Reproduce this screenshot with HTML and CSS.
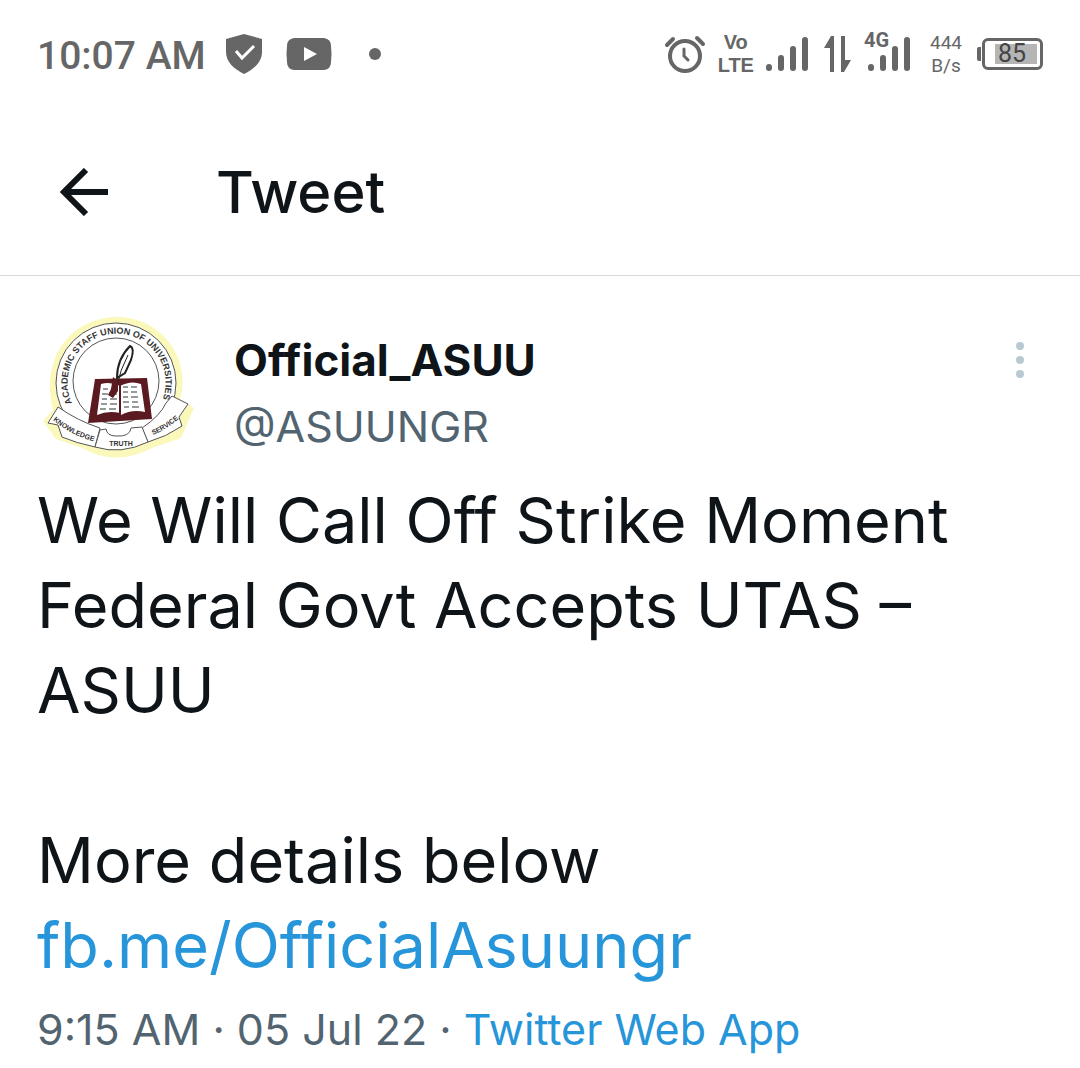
FILE: index.html
```html
<!DOCTYPE html>
<html lang="en">
<head>
  <meta charset="UTF-8">
  <meta name="viewport" content="width=device-width, initial-scale=1.0">
  <title>Tweet</title>
  <link rel="stylesheet" href="styles.css">
</head>
<body>
  <!-- Phone status bar -->
  <div class="status-bar">
    <div class="status-left">
      <span class="clock">10:07 AM</span>
      <svg class="shield" width="36" height="40" viewBox="0 0 36 40">
        <path d="M18 0 L36 5 V18 C36 28 28 35 18 40 C8 35 0 28 0 18 V5 Z" fill="#666"/>
        <path d="M10 17 L16 24 L28 12" fill="none" stroke="#fff" stroke-width="3"/>
      </svg>
      <svg class="video" width="46" height="32" viewBox="0 0 46 32">
        <path d="M8 0 H38 Q45 1 45 8 Q46 16 45 24 Q45 31 38 32 H8 Q1 31 1 24 Q0 16 1 8 Q1 1 8 0 Z" fill="#666"/>
        <path d="M18 9 L31 16 L18 23 Z" fill="#fff"/>
      </svg>
      <span class="dot"></span>
    </div>
    <div class="status-right">
      <svg class="alarm" width="42" height="40" viewBox="0 0 42 40" fill="none" stroke="#666" stroke-width="4" stroke-linecap="round">
        <circle cx="21" cy="22" r="15"/>
        <path d="M20 15 V22 L24 26" stroke-width="3"/>
        <path d="M3 11 L9 5 M33 4 L39 10"/>
      </svg>
      <span class="volte"><span>Vo</span><span>LTE</span></span>
      <svg class="signal" width="42" height="34" viewBox="0 0 42 34" stroke="#666" stroke-width="6" stroke-linecap="round">
        <path d="M3 30 V31 M15 21 V31 M27 12 V31 M39 3 V31"/>
      </svg>
      <svg class="arrows" width="28" height="36" viewBox="0 0 28 36">
        <path d="M7 0 H10 V36 H6 V12 H0 Z M17 0 H21 V24 H27 L20 36 H17 Z" fill="#666"/>
      </svg>
      <span class="network">
        <span class="network-type">4G</span>
        <svg class="signal" width="42" height="34" viewBox="0 0 42 34" stroke="#666" stroke-width="6" stroke-linecap="round">
          <path d="M3 30 V31 M15 21 V31 M27 12 V31 M39 3 V31"/>
        </svg>
      </span>
      <span class="speed"><span>444</span><span>B/s</span></span>
      <span class="battery"><span class="battery-level">85</span></span>
    </div>
  </div>

  <header class="header">
    <button class="back" aria-label="Back">
      <svg width="48" height="48" viewBox="0 0 48 48" fill="none" stroke="#0f1419" stroke-width="6">
        <path d="M48 24 H5 M26 2 L4 24 L26 46"/>
      </svg>
    </button>
    <h1>Tweet</h1>
  </header>

  <main class="tweet">
    <div class="author">
      <svg class="avatar" width="160" height="150" viewBox="3 5 160 150">
        <defs>
          <path id="ring" d="M38 98 A49 49 0 1 1 128 96"/>
          <path id="left-banner" d="M19 115 Q36 130 62 137"/>
          <path id="right-banner" d="M119 130 Q134 124 150 109"/>
        </defs>
        <path d="M19 105 C5 50 40 12 83 12 C126 12 158 52 146 94 L160 103 L147 133 L118 143 Q82 162 48 143 L22 134 L9 116 Z" fill="#fbf8bc"/>
        <circle cx="82" cy="78" r="60" fill="#fff" stroke="#555" stroke-width="1"/>
        <circle cx="82" cy="76" r="43" fill="#fff" stroke="#555" stroke-width="1"/>
        <text class="seal-ring"><textPath href="#ring">ACADEMIC STAFF UNION OF UNIVERSITIES</textPath></text>
        <!-- Ribbon -->
        <path d="M24 102 L14 118 L24 120 L28 132 Q42 138 61 142 L66 123 Q44 116 24 102 Z" fill="#fff" stroke="#555"/>
        <path d="M138 91 L154 99 L145 112 L148 121 Q132 132 114 137 L108 123 Q126 111 132 98 Z" fill="#fff" stroke="#555"/>
        <path d="M61 142 L66 125 L72 124 Q73 131 82 131 Q96 132 97 123 L108 122 L114 137 Q87 150 61 142 Z" fill="#fff" stroke="#555"/>
        <text class="seal-banner"><textPath href="#left-banner">KNOWLEDGE</textPath></text>
        <text class="seal-truth" x="87" y="141" text-anchor="middle">TRUTH</text>
        <text class="seal-banner"><textPath href="#right-banner">SERVICE</textPath></text>
        <!-- Open book -->
        <path d="M61 74 L113 73 L118 114 L54 118 Z" fill="#5a1a20"/>
        <path d="M67 79 Q76 76 86 81 L86 108 Q74 105 63 110 Z" fill="#fff"/>
        <path d="M86 81 Q97 75 107 79 L111 107 Q98 104 87 110 Z" fill="#fff"/>
        <path d="M69 84 h5 m3 0 h5 M68 89 h6 m3 0 h6 M68 94 h5 m3 0 h7 M67 99 h6 m3 0 h7 M66 104 h6 m3 0 h7 M89 82 h5 m3 0 h6 M89 87 h5 m3 0 h6 M89 92 h5 m3 0 h7 M89 97 h6 m3 0 h6 M90 102 h5 m3 0 h7" stroke="#999" stroke-width="2"/>
        <path d="M86 80 V110" stroke="#5a1a20" stroke-width="2"/>
        <!-- Quill -->
        <path d="M83 73 Q83 54 96 41 Q101 43 97 55 L91 68 Z" fill="#fff" stroke="#222" stroke-width="2"/>
        <path d="M83 81 Q86 65 94 50" fill="none" stroke="#222"/>
        <path d="M79 72 L84 76 L84 86 L79 93 L74 90 L77 84 Z" fill="#5a1a20"/>
      </svg>
      <div class="names">
        <span class="name">Official_ASUU</span>
        <span class="handle">@ASUUNGR</span>
      </div>
      <button class="more" aria-label="More">
        <svg width="10" height="38" viewBox="0 0 10 38" fill="#b9c9d3">
          <circle cx="5" cy="5" r="4"/>
          <circle cx="5" cy="19" r="4"/>
          <circle cx="5" cy="33" r="4"/>
        </svg>
      </button>
    </div>

    <div class="text">
      <p>We Will Call Off Strike Moment Federal Govt Accepts UTAS – ASUU</p>
      <p>More details below<br><a href="#">fb.me/OfficialAsuungr</a></p>
    </div>

    <div class="meta">9:15 AM · 05 Jul 22 · <a href="#">Twitter Web App</a></div>
  </main>
</body>
</html>
```
FILE: styles.css
```css
body {
  margin: 0;
  background-color: #fff;
  color: #0f1419;
  font-family: Inter, Roboto, sans-serif;
}

a {
  color: #2795d9;
  text-decoration: none;
}

button {
  display: flex;
  padding: 0;
  border: none;
  background: none;
  cursor: pointer;
}

/* Status bar */
.status-bar {
  display: flex;
  justify-content: space-between;
  align-items: center;
  height: 108px;
  padding: 0 37px;
  color: #666;
  font-family: Roboto, sans-serif;
}

.status-left, .status-right {
  display: flex;
  align-items: center;
}

.clock {
  margin-right: 20px;
  padding-top: 3px;
  font-size: 39px;
  font-weight: 500;
  line-height: 40px;
}

.shield {
  margin-right: 24px;
}

.dot {
  width: 12px;
  height: 12px;
  margin-left: 37px;
  border-radius: 50%;
  background-color: #666;
}

.status-right {
  gap: 12px;
}

.volte {
  display: flex;
  flex-direction: column;
  align-items: center;
  font-family: "Liberation Sans", sans-serif;
  font-size: 20px;
  font-weight: bold;
  line-height: 23px;
}

.arrows {
  margin-left: 4px;
}

.network {
  position: relative;
  display: flex;
  margin-left: 4px;
}

.network-type {
  position: absolute;
  top: -7px;
  left: -4px;
  font-size: 20px;
  font-weight: bold;
  line-height: 20px;
}

.speed {
  display: flex;
  flex-direction: column;
  align-items: center;
  margin-left: 8px;
  font-size: 19px;
  line-height: 23px;
}

.battery {
  position: relative;
  box-sizing: border-box;
  width: 61px;
  height: 32px;
  margin-left: 8px;
  padding: 3px 3px 3px 10px;
  border: 3px solid #666;
  border-radius: 6px;
}

.battery::before {
  content: "";
  position: absolute;
  top: 6px;
  left: -8px;
  width: 4px;
  height: 14px;
  border-radius: 2px 0 0 2px;
  background-color: #666;
}

.battery-level {
  display: block;
  padding-left: 3px;
  background-color: #b5b5b5;
  color: #444;
  font-size: 25px;
  line-height: 20px;
}

/* Header */
.header {
  display: flex;
  align-items: center;
  height: 167px;
  padding: 0 60px;
  border-bottom: 1px solid #d5dadd;
}

.header h1 {
  margin: 0 0 0 108px;
  font-size: 58px;
  font-weight: 500;
}

/* Tweet */
.tweet {
  padding: 34px 37px 0;
}

.author {
  display: flex;
  align-items: flex-start;
}

.names {
  display: flex;
  flex: 1;
  flex-direction: column;
  margin: 17px 0 0 37px;
  font-size: 43px;
  line-height: 66px;
}

.name {
  font-size: 44px;
  font-weight: bold;
}

.handle {
  color: #536471;
}

.more {
  margin: 31px 18px 0 0;
}

.text {
  margin-top: 18px;
  font-size: 63px;
  line-height: 85px;
}

.text p {
  margin: 0 0 85px;
}

.text p:last-child {
  margin-bottom: 0;
}

.meta {
  margin-top: 8px;
  color: #536471;
  font-size: 43px;
  line-height: 66px;
}

.seal-ring, .seal-truth, .seal-banner {
  fill: #333;
  font-family: "Liberation Sans", sans-serif;
  font-size: 9px;
  font-weight: bold;
}

.seal-truth, .seal-banner {
  font-size: 7px;
}
```
